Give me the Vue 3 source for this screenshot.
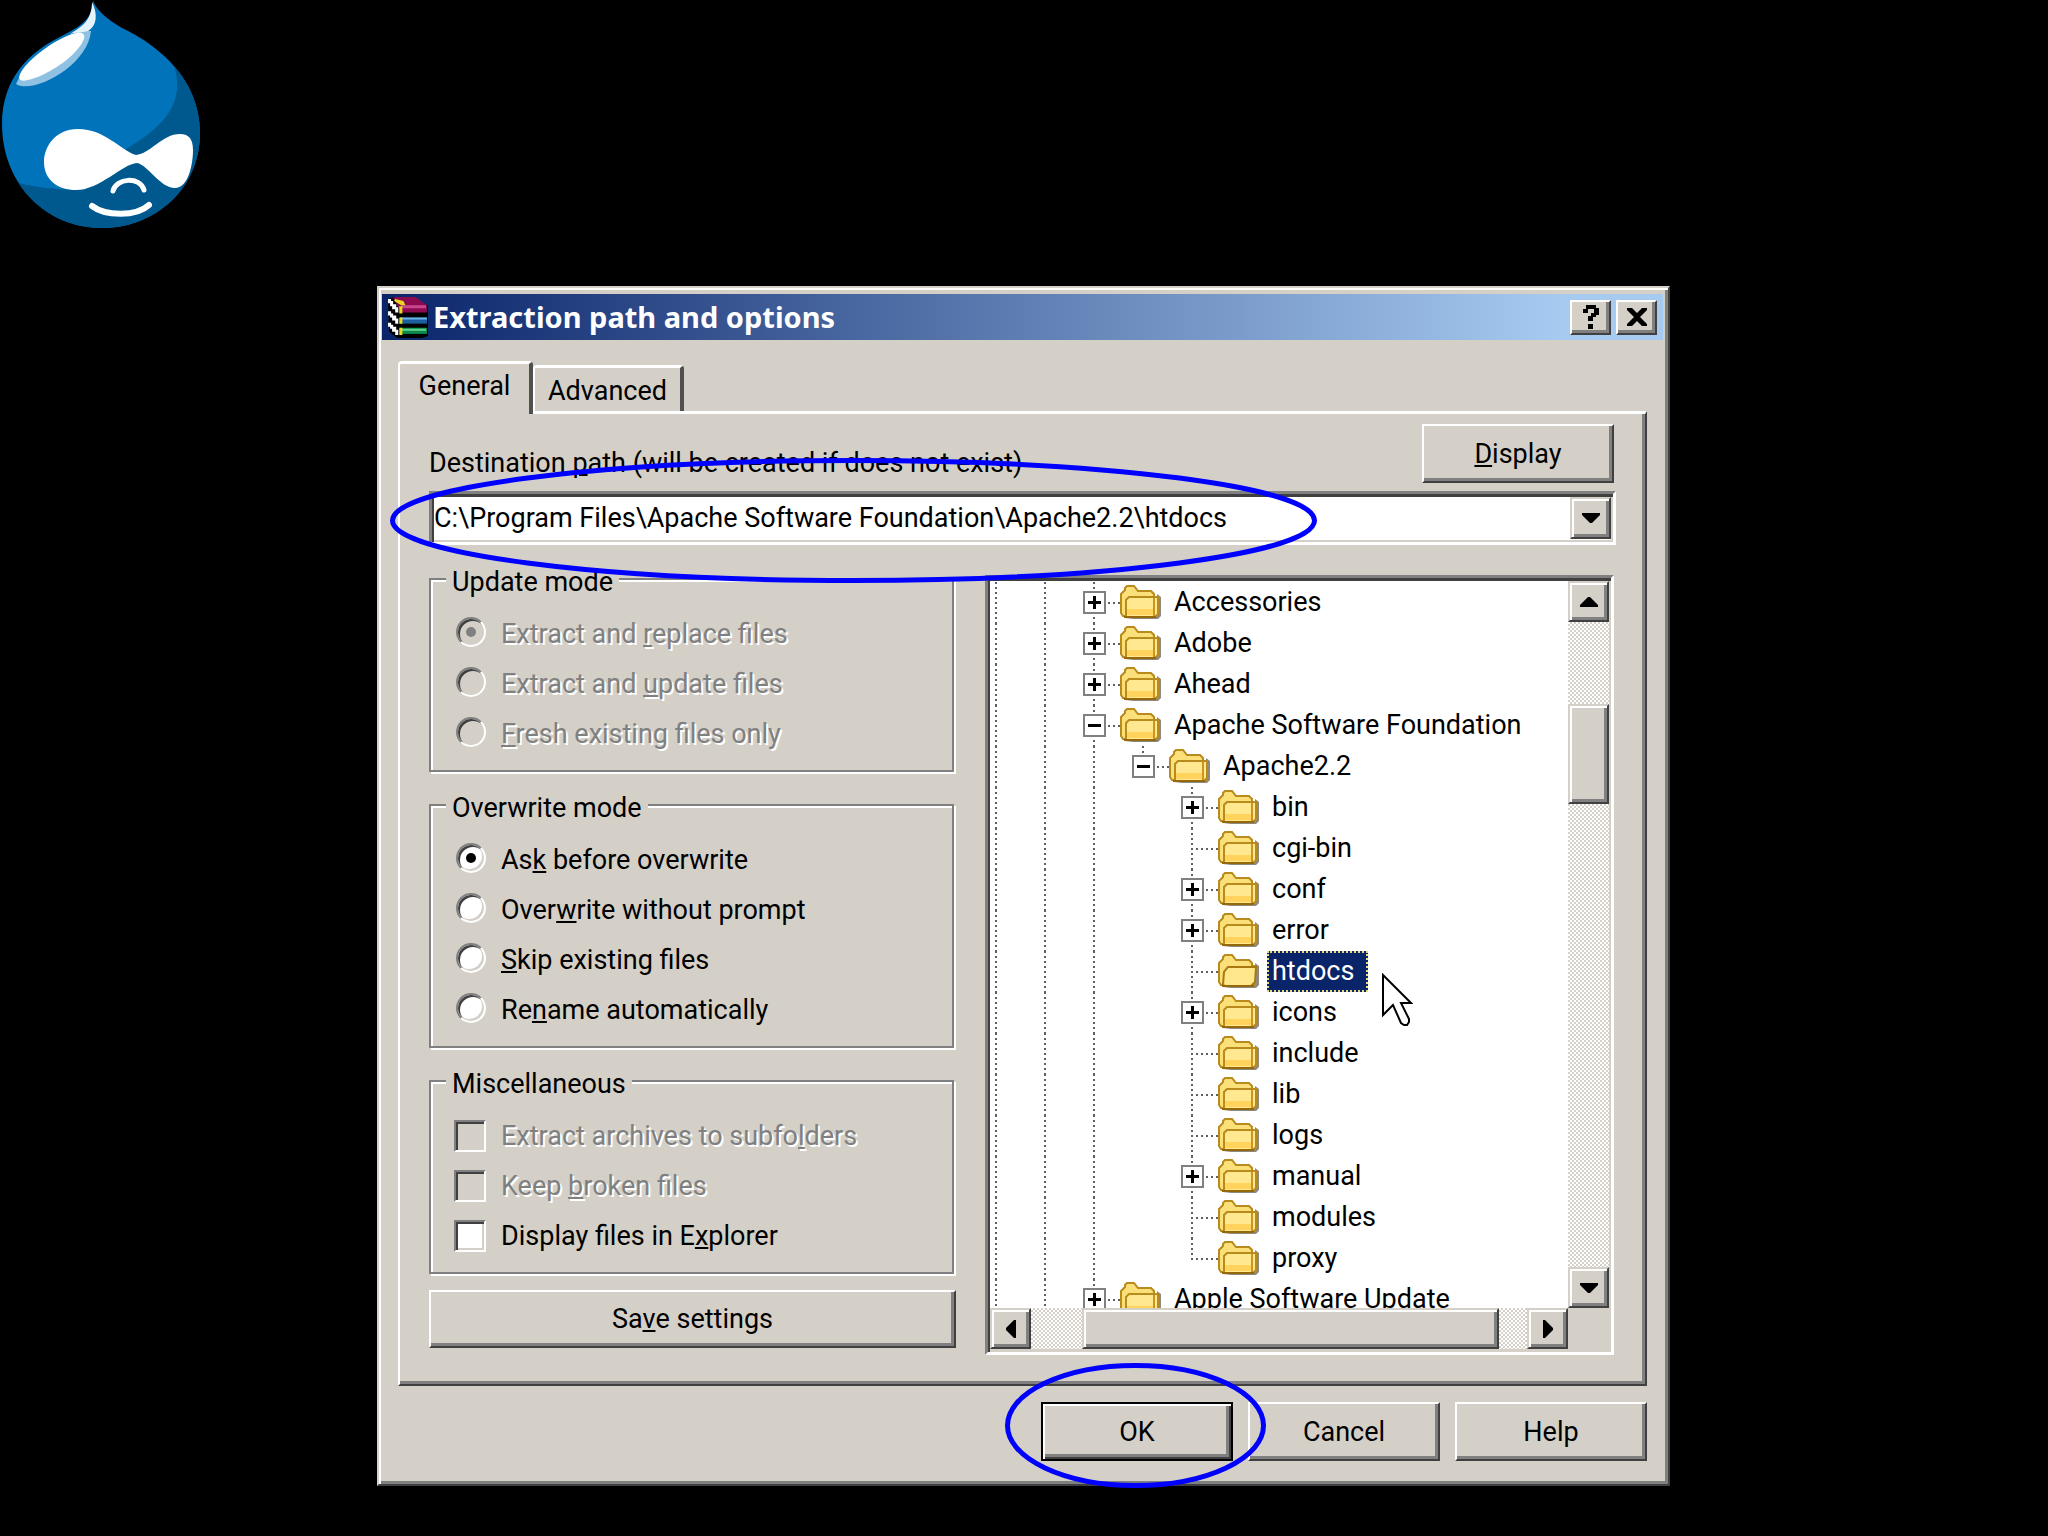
<template>
  <main class="slide">
    <header class="brand">
      <svg class="logo" viewBox="0 0 204 230" role="img" aria-label="Drupal">
        <defs>
          <clipPath id="drop"><path :d="dropPath" /></clipPath>
        </defs>
        <path :d="dropPath" fill="#0073ba" />
        <path clip-path="url(#drop)" fill="#00598e" d="M172 60C186 96 172 122 126 149L84 190C60 190 34 188 8 180V240H220V60Z" />
        <path fill="#8fc1e3" d="M16 84C32 95 88 66 91 31L84 30C60 40 28 56 16 84Z" />
        <path fill="#fff" d="M20 74C26 62 48 43 72 34C82 30 87 34 83 41C77 54 58 68 40 76C28 81 16 84 20 74Z" />
        <path fill="#e4f3fc" d="M92 2C98 14 97 26 88 31C82 33 76 32 70 34C82 27 92 20 92 2Z" />
        <path fill="#fff" d="M136 155C120 150 105 129 78 129C55 129 44 147 44 162C44 180 58 190 76 190C100 190 122 164 137 163C148 165 160 188 175 188C188 188 193 165 193 150C193 138 188 134 180 134C162 134 150 154 136 155Z" />
        <path class="stroke" stroke-width="5" d="M113 191C116 178 140 176 144 190" />
        <path class="stroke" stroke-width="6" d="M92 206C105 216 136 217 149 205" />
      </svg>
    </header>

    <section class="dialog" role="dialog" aria-labelledby="dialog-title">
      <div class="titlebar">
        <svg class="app-icon" viewBox="0 0 40 40" aria-hidden="true">
          <path fill="#000" d="M1 2L8 0L40 8V38L34 40H10L2 34Z" />
          <path fill="#8b0a50" d="M6 1L8 0H28L39 8V15H14Z" />
          <path fill="#c9478d" d="M14 8H38V11H14Z" />
          <path fill="#1c5f9e" d="M13 20H39V26H13Z" />
          <path fill="#6bb0e6" d="M13 20H39V22H13Z" />
          <path fill="#0b8a4a" d="M13 30H39V36H13Z" />
          <path fill="#5fd08f" d="M13 31H38V33H13Z" />
          <path fill="#e8d820" d="M8 2L16 4L18 8H14L7 4ZM12 9H15V16H12ZM12 20H15V26H12ZM12 30H15V37H12Z" />
          <path fill="#fff" d="M1 2H4V4H6V7H9V10H11V15H8V12H5V9H3V6H1ZM1 14H4V16H6V18H9V21H11V26H8V23H5V20H3V18H1ZM1 25H4V27H6V29H9V32H11V37H8V34H5V31H3V29H1Z" />
        </svg>
        <h1 id="dialog-title">Extraction path and options</h1>
        <button class="raised caption" type="button" aria-label="Help">
          <svg viewBox="0 0 16 24" width="16" height="24"><path d="M0 4H3V0H13V3H16V10H13V12H10V16H5V11H8V8H11V4H5V8H0ZM5 19H10V24H5Z" /></svg>
        </button>
        <button class="raised caption" type="button" aria-label="Close">
          <svg viewBox="0 0 20 18" width="20" height="18"><path d="M0 0H5L10 5L15 0H20V2L13 9L20 16V18H15L10 13L5 18H0V16L7 9L0 2Z" /></svg>
        </button>
      </div>

      <div class="body">
        <div class="tabs" role="tablist">
          <button class="tab active" type="button" role="tab" aria-selected="true">General</button>
          <button class="tab" type="button" role="tab" aria-selected="false">Advanced</button>
        </div>

        <div class="panel" role="tabpanel">
          <div class="path-head">
            <label for="path"><Mnemonic text="Destination &path (will be created if does not exist)" /></label>
            <button class="raised push" type="button"><Mnemonic text="&Display" /></button>
          </div>
          <div class="combo">
            <input id="path" v-model="path" type="text">
            <button class="raised arrow" type="button" aria-label="Show recent paths">
              <svg viewBox="0 0 18 10" width="18" height="10"><path :d="arrowDown" /></svg>
            </button>
            <svg class="mark path-mark" viewBox="0 0 927 125" aria-hidden="true">
              <ellipse cx="463.5" cy="62.5" rx="461" ry="60" />
            </svg>
          </div>

          <div class="columns">
            <div class="options">
              <fieldset v-for="group in groups" :key="group.title">
                <legend>{{ group.title }}</legend>
                <label
                  v-for="(item, i) in group.items"
                  :key="item.text"
                  class="option"
                  :class="{ off: item.disabled }"
                >
                  <input
                    :type="group.type"
                    :name="group.title"
                    :checked="group.checked === i"
                    :disabled="item.disabled"
                  >
                  <span><Mnemonic :text="item.text" /></span>
                </label>
              </fieldset>
              <button class="raised save" type="button"><Mnemonic text="Sa&ve settings" /></button>
            </div>

            <div class="tree-box">
              <ul class="tree" role="tree">
                <li
                  v-for="node in nodes"
                  :key="node.name"
                  role="treeitem"
                  :aria-selected="node.name === selected"
                >
                  <span v-for="n in node.level" :key="n" class="guide" :class="{ blank: n === 4 }" />
                  <span class="branch" :class="{ last: node.last }">
                    <button v-if="node.sign" class="toggle" type="button" :aria-label="'Toggle ' + node.name">
                      <svg viewBox="0 0 19 19" width="19" height="19">
                        <path :d="node.sign === '+' ? 'M3 8H16V11H3ZM8 3H11V16H8Z' : 'M3 8H16V11H3Z'" />
                      </svg>
                    </button>
                  </span>
                  <svg class="folder" viewBox="0 0 41 35" width="41" height="35" aria-hidden="true">
                    <path fill="#8e8a82" d="M5 34H38L41 31V12L37 9V30Z" />
                    <path fill="#fbe07a" stroke="#b98a1c" stroke-width="2" d="M1 9L5 5V3L7 1H14L18 6H31L34 9V12H37V31H3L1 28Z" />
                    <path v-if="node.name === selected" fill="#ffe78c" stroke="#a9780f" stroke-width="2" d="M5 31L6 18L10 13H38L37 28L33 32H7Z" />
                    <template v-else>
                      <path fill="#ffe88f" stroke="#b98a1c" stroke-width="2" d="M6 31V15L9 12H38V29L35 32H6Z" />
                      <path fill="#ffd35c" d="M7 24H33V30H7Z" />
                      <path fill="#c9961f" d="M33 13H35V31H33Z" />
                    </template>
                    <path fill="#96680c" d="M4 31H36V33H4Z" />
                  </svg>
                  <span class="name" :class="{ selected: node.name === selected }">
                    {{ node.name }}
                    <svg v-if="node.name === selected" class="cursor" viewBox="0 0 31 54" width="31" height="54" aria-hidden="true">
                      <path d="M1 2V42L11 32L19 50L22 52H25L27 49V46L19 30H29Z" />
                    </svg>
                  </span>
                </li>
              </ul>
              <div class="scroll vertical">
                <button class="raised arrow" type="button" aria-label="Scroll up">
                  <svg viewBox="0 0 18 10" width="18" height="10"><path d="M0 10V8L8 0H10L18 8V10Z" /></svg>
                </button>
                <div class="track"><div class="raised thumb" /></div>
                <button class="raised arrow" type="button" aria-label="Scroll down">
                  <svg viewBox="0 0 18 10" width="18" height="10"><path :d="arrowDown" /></svg>
                </button>
              </div>
              <div class="scroll horizontal">
                <button class="raised arrow" type="button" aria-label="Scroll left">
                  <svg viewBox="0 0 10 18" width="10" height="18"><path d="M10 0H8L0 8V10L8 18H10Z" /></svg>
                </button>
                <div class="track"><div class="raised thumb" /></div>
                <button class="raised arrow" type="button" aria-label="Scroll right">
                  <svg viewBox="0 0 10 18" width="10" height="18"><path d="M0 0H2L10 8V10L2 18H0Z" /></svg>
                </button>
              </div>
            </div>
          </div>
        </div>

        <div class="footer">
          <div class="default-wrap">
            <button class="raised push default" type="button">OK</button>
            <svg class="mark ok-mark" viewBox="0 0 261 125" aria-hidden="true">
              <ellipse cx="130.5" cy="62.5" rx="128" ry="60" />
            </svg>
          </div>
          <button class="raised push" type="button">Cancel</button>
          <button class="raised push" type="button">Help</button>
        </div>
      </div>
    </section>
  </main>
</template>

<script setup>
import { h, ref } from 'vue'

// '&' marks the access key, as in Windows resource strings
const Mnemonic = ({ text }) => {
  const [before, rest] = text.split('&')
  return [before, h('u', rest[0]), rest.slice(1)]
}
Mnemonic.props = ['text']

const dropPath = 'M93 0C95 9 108 20 122 28C160 46 200 80 200 133C200 188 156 228 102 228C46 228 2 184 2 124C2 78 30 52 58 38C76 28 93 22 93 0Z'
const arrowDown = 'M0 0H18V2L10 10H8L0 2Z'

const path = ref('C:\\Program Files\\Apache Software Foundation\\Apache2.2\\htdocs')
const selected = ref('htdocs')

const groups = [
  {
    title: 'Update mode',
    type: 'radio',
    checked: 0,
    items: [
      { text: 'Extract and &replace files', disabled: true },
      { text: 'Extract and &update files', disabled: true },
      { text: '&Fresh existing files only', disabled: true },
    ],
  },
  {
    title: 'Overwrite mode',
    type: 'radio',
    checked: 0,
    items: [
      { text: 'As&k before overwrite' },
      { text: 'Over&write without prompt' },
      { text: '&Skip existing files' },
      { text: 'Re&name automatically' },
    ],
  },
  {
    title: 'Miscellaneous',
    type: 'checkbox',
    items: [
      { text: 'Extract archives to subfo&lders', disabled: true },
      { text: 'Keep &broken files', disabled: true },
      { text: 'Display files in E&xplorer' },
    ],
  },
]

const nodes = [
  { name: 'Accessories', level: 2, sign: '+' },
  { name: 'Adobe', level: 2, sign: '+' },
  { name: 'Ahead', level: 2, sign: '+' },
  { name: 'Apache Software Foundation', level: 2, sign: '-' },
  { name: 'Apache2.2', level: 3, sign: '-', last: true },
  { name: 'bin', level: 4, sign: '+' },
  { name: 'cgi-bin', level: 4 },
  { name: 'conf', level: 4, sign: '+' },
  { name: 'error', level: 4, sign: '+' },
  { name: 'htdocs', level: 4 },
  { name: 'icons', level: 4, sign: '+' },
  { name: 'include', level: 4 },
  { name: 'lib', level: 4 },
  { name: 'logs', level: 4 },
  { name: 'manual', level: 4, sign: '+' },
  { name: 'modules', level: 4 },
  { name: 'proxy', level: 4, last: true },
  { name: 'Apple Software Update', level: 2, sign: '+' },
]
</script>

<style>
body {
  margin: 0;
  background: #000;
}
</style>

<style scoped>
.slide {
  box-sizing: border-box;
  min-height: 100vh;
  padding: 0 378px 51px 377px;
  background: #000;
  color: #000;
  font: 27px/32px Roboto, "Liberation Sans", sans-serif;
}
.slide *,
.slide *::before {
  box-sizing: border-box;
}
button,
input {
  margin: 0;
  padding: 0;
  border-radius: 0;
  color: inherit;
  font: inherit;
}
u {
  text-decoration-thickness: 2px;
  text-underline-offset: 3px;
  text-decoration-skip-ink: none;
}
.brand {
  height: 286px;
  margin-left: -377px;
}
.logo {
  display: block;
  width: 204px;
  height: 230px;
}
.stroke {
  fill: none;
  stroke: #fff;
  stroke-linecap: round;
}

.dialog {
  padding: 6px 5px 23px 3px;
  border: 2px solid;
  border-color: #d4d0c8 #404040 #404040 #d4d0c8;
  background: #d4d0c8;
  box-shadow: inset 2px 2px #fff, inset -3px -3px #808080;
}
.titlebar {
  display: flex;
  align-items: center;
  gap: 5px;
  height: 46px;
  padding: 0 6px 0 5px;
  background: linear-gradient(90deg, #0a246a, #a6caf0 92%);
}
.titlebar h1 {
  flex: 1;
  margin: 0;
  color: #fff;
  font: bold 29px/32px "Noto Sans", sans-serif;
}
.app-icon {
  width: 41px;
  height: 41px;
}

.raised {
  display: flex;
  align-items: center;
  justify-content: center;
  border: 2px solid;
  border-color: #fff #404040 #404040 #fff;
  background: #d4d0c8;
  box-shadow: inset -3px -3px #808080;
}
.caption {
  width: 41px;
  height: 35px;
}
.push {
  display: block;
  width: 192px;
  height: 59px;
}
.arrow {
  flex: none;
  width: 41px;
  height: 41px;
}
.arrow,
.thumb {
  border-color: #d4d0c8 #404040 #404040 #d4d0c8;
  box-shadow: inset 2px 2px #fff, inset -3px -3px #808080;
}

.body {
  padding: 21px 16px 0 16px;
}
.tabs {
  display: flex;
  align-items: flex-end;
  height: 50px;
}
.tab {
  width: 151px;
  height: 46px;
  padding-top: 2px;
  border: 3px solid;
  border-width: 3px 4px 0 2px;
  border-color: #fff #505050 #fff #fff;
  border-radius: 4px 4px 0 0;
  background: #d4d0c8;
}
.tab.active {
  z-index: 1;
  width: 135px;
  height: 53px;
  margin-bottom: -3px;
  padding-bottom: 8px;
}
.panel {
  padding: 10px 29px 29px;
  border: solid;
  border-width: 3px 2px 2px;
  border-color: #fff #404040 #404040 #fff;
  box-shadow: inset -3px -3px #808080;
}
.path-head {
  display: flex;
  justify-content: space-between;
}
.path-head label {
  padding-top: 23px;
}
.path-head .push {
  margin-right: 2px;
}
.combo {
  position: relative;
  display: flex;
  height: 54px;
  margin-top: 8px;
  padding: 3px 2px 3px 2px;
  border: solid;
  border-width: 3px;
  border-color: #808080 #fff #fff #808080;
  background: #fff;
  box-shadow: inset 2px 3px #404040, inset -2px -2px #d4d0c8;
}
.combo input {
  flex: 1;
  min-width: 0;
  border: 0;
  outline: 0;
  background: none;
}
.mark {
  position: absolute;
  z-index: 2;
  fill: none;
  stroke: #00f;
  stroke-width: 5px;
  pointer-events: none;
}
.path-mark {
  top: -36px;
  left: -42px;
  width: 927px;
  height: 125px;
}
.combo .arrow {
  height: auto;
}

.columns {
  display: grid;
  grid-template-columns: 527fr 629fr;
  gap: 29px;
  padding: 15px 2px 0 0;
}
.options {
  display: flex;
  flex-direction: column;
  gap: 14px;
}
fieldset {
  margin: 0 2px 0 0;
  padding: 11px 23px 11px;
  border: 2px solid #808080;
  box-shadow: 2px 2px #fff, inset 2px 2px #fff;
}
legend {
  margin-left: -8px;
  padding: 6px 6px 0;
  background: #d4d0c8;
}
.option {
  display: flex;
  align-items: center;
  gap: 15px;
  height: 50px;
}
.option input {
  flex: none;
  display: grid;
  place-items: center;
  width: 32px;
  height: 32px;
  appearance: none;
  border: 2px solid;
  border-color: #808080 #fff #fff #808080;
  background: #fff;
  box-shadow: inset 2px 2px #404040, inset -2px -2px #d4d0c8;
}
.option input[type="radio"] {
  width: 30px;
  height: 30px;
  margin: 0 0 4px 2px;
  border-radius: 50%;
}
.option input[type="radio"]:checked::before {
  width: 10px;
  height: 10px;
  border-radius: 50%;
  background: #000;
  content: "";
}
.option input:disabled {
  background: #d4d0c8;
}
.option input[type="radio"]:disabled::before {
  background: #808080;
}
.off {
  color: #808080;
  text-shadow: 2px 2px #fff;
}
.save {
  display: block;
  height: 58px;
  margin-top: 2px;
}

.tree-box {
  display: grid;
  grid-template-columns: minmax(0, 1fr) 41px;
  grid-template-rows: auto 41px;
  align-self: start;
  margin-top: 15px;
  padding: 3px 2px 3px 2px;
  border: 3px solid;
  border-color: #808080 #fff #fff #808080;
  background: #d4d0c8;
  box-shadow: inset 2px 3px #404040;
}
.tree {
  max-height: 727px;
  margin: 0;
  padding: 1px 0 0 5px;
  overflow: hidden;
  background: #fff;
  list-style: none;
}
.tree li {
  display: flex;
  align-items: center;
  height: 41px;
  white-space: nowrap;
}
.guide,
.branch {
  flex: none;
  align-self: stretch;
  background: repeating-linear-gradient(180deg, #606060 0 2px, #fff 2px 5px) 0 0 / 2px 100% no-repeat;
}
.guide {
  width: 49px;
}
.guide.blank {
  background: none;
}
.branch {
  display: flex;
  align-items: center;
  width: 27px;
  background:
    repeating-linear-gradient(180deg, #606060 0 2px, #fff 2px 5px) 0 0 / 2px 100% no-repeat,
    repeating-linear-gradient(90deg, #606060 0 2px, #fff 2px 5px) 0 50% / 100% 2px no-repeat;
}
.branch.last {
  background-size: 2px 50%, 100% 2px;
}
.toggle {
  flex: none;
  width: 23px;
  height: 23px;
  margin-left: -10px;
  border: 2px solid #808080;
  background: #fff;
  line-height: 0;
}
.name {
  position: relative;
  height: 41px;
  margin-left: 8px;
  padding: 0 14px 0 5px;
  line-height: 40px;
}
.name.selected {
  background: #0a246a;
  outline: 2px dotted #e8dc80;
  outline-offset: -2px;
  color: #fff;
}
.cursor {
  position: absolute;
  top: 22px;
  left: calc(100% + 14px);
  fill: #fff;
  stroke: #000;
  stroke-width: 2px;
}
.scroll {
  display: flex;
}
.track {
  display: flex;
  flex: 1;
  background: repeating-conic-gradient(#d4d0c8 0 25%, #fff 0 50%) 0 0 / 4px 4px;
}
.thumb {
  flex: 1;
}
.vertical {
  flex-direction: column;
}
.vertical .track {
  padding-top: 82px;
}
.vertical .thumb {
  height: 100px;
}
.horizontal .track {
  padding: 0 28px 0 51px;
}

.footer {
  display: flex;
  justify-content: flex-end;
  gap: 15px;
  padding-top: 16px;
}
.default-wrap {
  position: relative;
}
.default {
  border-color: #000;
  box-shadow: inset 2px 2px #fff, inset -2px -2px #404040, inset -5px -5px #808080;
}
.ok-mark {
  top: -39px;
  left: -36px;
  width: 261px;
  height: 125px;
}
</style>
